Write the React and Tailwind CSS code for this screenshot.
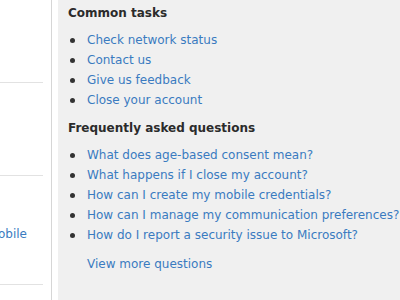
import React from 'react'

const tasks = ['Check network status', 'Contact us', 'Give us feedback', 'Close your account']

const faqs = [
  'What does age-based consent mean?',
  'What happens if I close my account?',
  'How can I create my mobile credentials?',
  'How can I manage my communication preferences?',
  'How do I report a security issue to Microsoft?',
]

function Item({ children }) {
  return (
    <li className="flex items-center h-[20px] whitespace-nowrap">
      <span className="w-[5px] h-[5px] rounded-full bg-[#333] ml-[2px] mr-[12px] shrink-0" />
      <a className="text-[#3a7bc0]">{children}</a>
    </li>
  )
}

export default function App() {
  return (
    <div className="flex h-[300px] w-[400px] overflow-hidden bg-white text-[12px] leading-[20px]" style={{ fontFamily: '"DejaVu Sans", Verdana, sans-serif' }}>
      {/* left column, mostly cut off */}
      <div className="w-[52px] shrink-0 border-r border-[#d6d6d6] pr-[8px] flex flex-col">
        <div className="h-[82px]" />
        <div className="h-px bg-[#e2e2e2]" />
        <div className="h-[92px]" />
        <div className="h-px bg-[#e2e2e2]" />
        <div className="h-[48px]" />
        <div className="flex justify-end overflow-hidden whitespace-nowrap pr-[16px] text-[#3a7bc0]">
          Set up mobile
        </div>
        <div className="h-[40px]" />
        <div className="h-px bg-[#e2e2e2]" />
      </div>

      {/* right panel */}
      <div className="ml-[6px] flex-1 bg-[#f0f0f0] pl-[10px] pt-[3px]">
        <h2 className="font-bold text-[#2b2b2b]">Common tasks</h2>
        <ul className="mt-[7px]">
          {tasks.map(t => <Item key={t}>{t}</Item>)}
        </ul>

        <h2 className="font-bold text-[#2b2b2b] mt-[8px]">Frequently asked questions</h2>
        <ul className="mt-[7px]">
          {faqs.map(f => <Item key={f}>{f}</Item>)}
        </ul>

        <a className="block mt-[9px] pl-[19px] text-[#3a7bc0]">View more questions</a>
      </div>
    </div>
  )
}
